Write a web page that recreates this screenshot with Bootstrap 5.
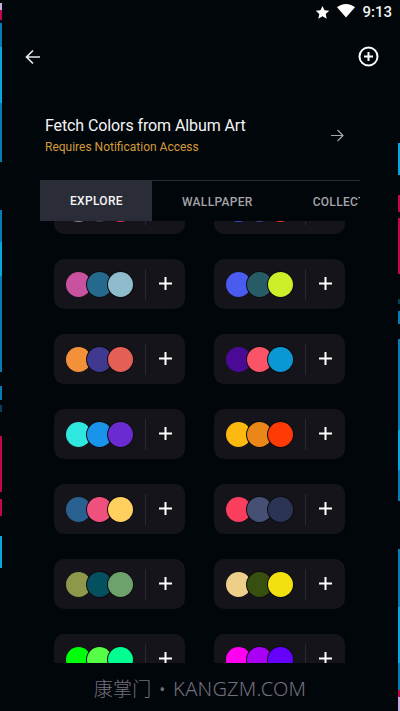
<!DOCTYPE html>
<html lang="en">
<head>
  <meta charset="UTF-8">
  <meta name="viewport" content="width=device-width, initial-scale=1">
  <title>Palettes</title>
  <link href="https://cdn.jsdelivr.net/npm/bootstrap@5.3.2/dist/css/bootstrap.min.css" rel="stylesheet">
  <style>
    html, body { background: #01060b; }
    body { font-family: Roboto, sans-serif; color: #fff; overflow: hidden; }
    .screen { width: 400px; height: 711px; position: relative; overflow: hidden; }
    .edge { position: absolute; top: 0; width: 2px; height: 100%; }
    .edge-left { left: 0; }
    .edge-right { right: 0; }
    .edge i { position: absolute; left: 0; width: 100%; display: block; }
    .status-row { height: 24px; padding-right: 8px; gap: 7px; font-size: 15px; font-weight: 500; color: #f1f1f1; }
    .status-row svg:nth-child(2) { margin-bottom: 2px; }
    .tool-row { height: 50px; margin-top: 8px; padding: 0 21.5px 0 25px; }
    .tool-row svg:last-child { margin-bottom: 2px; }
    .main-col { margin: 0 40px; }
    .fetch-row { height: 42px; margin-top: 32px; padding: 0 16px 0 5px; }
    .fetch-title { font-size: 16px; line-height: 24px; color: #f4f4f4; letter-spacing: -.1px; }
    .fetch-sub { font-size: 12px; line-height: 18px; color: #d59c38; }
    .tab-row { margin-top: 24px; height: 41px; border-top: 1px solid #2a2c36; flex-wrap: nowrap; overflow: hidden; }
    .tab-row .nav-link { padding: 1px 30px 0; line-height: 40px; font-size: 12px; font-weight: 500; letter-spacing: .3px; color: #a4a4a8; white-space: nowrap; }
    .tab-row .nav-link.active { color: #f4f4f6; background: #2a2c37; margin-top: -1px; line-height: 41px; padding: 1px 30px 0; width: 112px; border-radius: 0; }
    .palette-clip { height: 442px; overflow: hidden; }
    .palette-grid { display: grid; grid-template-columns: 131px 131px; column-gap: 29px; row-gap: 25px; margin: -37px 0 0 14px; }
    .swatch-box { height: 50px; border-radius: 10px; background: #15141a; padding-left: 12px; }
    .dot { width: 25px; height: 25px; border-radius: 50%; box-shadow: 0 0 0 1px #0e0d12; position: relative; }
    .dot:first-child { box-shadow: none; }
    .dot + .dot { margin-left: -4px; }
    .swatch-line { width: 1px; height: 31px; background: #2a292f; margin-left: 12px; }
    .swatch-plus { flex: 1; padding: 0 1px 1px 0; }
    .mark-text { margin-top: 11px; font-family: "Noto Sans", "Noto Sans CJK SC", sans-serif; font-size: 20px; font-weight: 300; letter-spacing: .25px; word-spacing: 1.5px; line-height: 30px; color: #756f7e; }
    .mark-cjk { font-size: 19px; }
  </style>
  <script src="https://cdn.jsdelivr.net/npm/bootstrap@5.3.2/dist/js/bootstrap.bundle.min.js"></script>
</head>
<body>
  <div class="screen">
    <div class="edge edge-left" id="edgeLeft"></div>
    <div class="edge edge-right" id="edgeRight"></div>

    <div class="status-row d-flex justify-content-end align-items-center">
      <svg width="15" height="15" viewBox="0 0 24 24" fill="#fff"><path d="M12 1.5l3.2 7 7.6.8-5.7 5.1 1.6 7.6L12 18.1 5.3 22l1.6-7.6L1.2 9.3l7.6-.8z"/></svg>
      <svg width="18" height="14" viewBox="0 0 17 14" preserveAspectRatio="none" fill="#fff"><path d="M8.5 13.5L0 3.2C2.3 1.3 5.2 0 8.5 0s6.2 1.3 8.5 3.2z"/></svg>
      <span>9:13</span>
    </div>

    <div class="tool-row d-flex justify-content-between align-items-center">
      <svg width="16" height="16" viewBox="0 0 16 16" fill="none" stroke="#e8e8e8" stroke-width="1.7"><path d="M15 8H2M8 1.5L1.5 8 8 14.5"/></svg>
      <svg width="21" height="21" viewBox="0 0 21 21" fill="none" stroke="#fff" stroke-width="2"><circle cx="10.5" cy="10.5" r="9"/><path d="M10.5 6v9M6 10.5h9"/></svg>
    </div>

    <div class="main-col">
      <div class="fetch-row d-flex justify-content-between align-items-center">
        <div>
          <div class="fetch-title">Fetch Colors from Album Art</div>
          <div class="fetch-sub">Requires Notification Access</div>
        </div>
        <svg width="13" height="13" viewBox="0 0 13 13" fill="none" stroke="#a8a8ac" stroke-width="1.2"><path d="M0 6.5h12M6.5 1l5.5 5.5L6.5 12"/></svg>
      </div>

      <ul class="nav tab-row">
        <li class="nav-item"><a class="nav-link active text-center" href="#">EXPLORE</a></li>
        <li class="nav-item"><a class="nav-link" href="#">WALLPAPER</a></li>
        <li class="nav-item"><a class="nav-link" href="#">COLLECTIONS</a></li>
      </ul>

      <div class="palette-clip">
        <div class="palette-grid" id="palettes"></div>
      </div>
    </div>

    <div class="mark-text text-center"><span class="mark-cjk">康掌门</span> • KANGZM.COM</div>
  </div>

  <script>
    const palettes = [
      ['#8a8a90', '#3a3a60', '#e03a50'], ['#3a50d0', '#4a4a90', '#e04040'],
      ['#c9529f', '#256a8d', '#8fbccd'], ['#4a5bf0', '#275c66', '#cdef2a'],
      ['#f2913a', '#3f3a90', '#e45f55'], ['#4b0a96', '#fb5468', '#0a97d4'],
      ['#2ee8e0', '#1a94ea', '#6a2bd0'], ['#fdb90f', '#ea8718', '#ff3a05'],
      ['#2a6090', '#f0507e', '#ffd060'], ['#fb3e5e', '#465074', '#2c3455'],
      ['#8f974a', '#05505f', '#6ea26c'], ['#edcf8a', '#38500f', '#f2e010'],
      ['#00ff0a', '#55ff45', '#00ff90'], ['#ff00f0', '#aa00f5', '#6600ff']
    ];
    document.getElementById('palettes').innerHTML = palettes.map(p => `
      <div class="swatch-box d-flex align-items-center">
        ${p.map(c => `<div class="dot" style="background:${c}"></div>`).join('')}
        <div class="swatch-line"></div>
        <div class="swatch-plus d-flex justify-content-center">
          <svg width="13" height="13" viewBox="0 0 13 13" fill="none" stroke="#fff" stroke-width="2"><path d="M6.5 0v13M0 6.5h13"/></svg>
        </div>
      </div>`).join('');

    // the blurred wallpaper bars that stick out on both edges: [top, bottom, colour]
    const blue = '#0a7cb0', cyan = '#06a8dc', red = '#c4064e', lilac = '#c8aee0', dark = '#06405a';
    const left = [[3, 10, lilac], [10, 20, red], [23, 47, blue], [47, 103, cyan], [103, 162, blue],
      [210, 242, blue], [242, 276, cyan], [276, 372, blue], [386, 400, blue], [405, 412, dark],
      [436, 492, red], [499, 516, red], [536, 568, cyan]];
    const right = [[143, 175, cyan], [195, 212, red], [218, 274, red], [299, 304, dark], [311, 324, blue],
      [339, 430, blue], [430, 470, cyan], [470, 501, blue], [549, 607, blue], [607, 663, cyan],
      [663, 690, blue], [690, 697, red], [697, 711, lilac]];
    const bars = list => list.map(b => `<i style="top:${b[0]}px;height:${b[1] - b[0]}px;background:${b[2]}"></i>`).join('');
    document.getElementById('edgeLeft').innerHTML = bars(left);
    document.getElementById('edgeRight').innerHTML = bars(right);
  </script>
</body>
</html>
